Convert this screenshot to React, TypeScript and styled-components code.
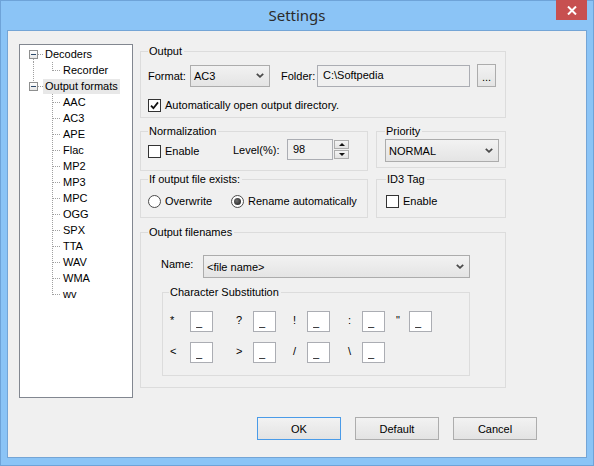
import React from 'react';
import styled, { createGlobalStyle } from 'styled-components';

const GlobalStyle = createGlobalStyle`
  html, body {
    margin: 0;
    padding: 0;
    background: #ffffff;
  }
  body {
    font-family: 'Liberation Sans', Arial, sans-serif;
    font-size: 11px;
    color: #000;
  }
  * {
    box-sizing: border-box;
  }
`;

const formats = ['AAC', 'AC3', 'APE', 'Flac', 'MP2', 'MP3', 'MPC', 'OGG', 'SPX', 'TTA', 'WAV', 'WMA', 'wv'];

const substitutions = [
  ['*', '?', '!', ':', '"'],
  ['<', '>', '/', '\\'],
];

function Chevron() {
  return (
    <svg width="8" height="5" viewBox="0 0 8 5">
      <polyline points="0.8,0.8 4,3.8 7.2,0.8" fill="none" stroke="#4a4a4a" strokeWidth="1.8" />
    </svg>
  );
}

function CheckMark() {
  return (
    <svg width="9" height="9" viewBox="0 0 9 9">
      <polyline points="1,4.6 3.4,7.2 8,1.4" fill="none" stroke="#111" strokeWidth="1.8" />
    </svg>
  );
}

function Check({ checked, label }: { checked?: boolean; label: string }) {
  return (
    <CheckLabel>
      <CheckBox>{checked && <CheckMark />}</CheckBox>
      {label}
    </CheckLabel>
  );
}

function Radio({ on, label }: { on?: boolean; label: string }) {
  return (
    <CheckLabel>
      <RadioDot $on={on} />
      {label}
    </CheckLabel>
  );
}

function Combo({ value, width, height }: { value: string; width: number; height: number }) {
  return (
    <ComboBox $w={width} $h={height}>
      <span>{value}</span>
      <Chevron />
    </ComboBox>
  );
}

function FormatTree() {
  return (
    <Tree>
      <TreeRow>
        <Expander />
        <Stem $x={13} $from={13} $to={16} />
        <Branch $x={18} $w={5} />
        <NodeLabel>Decoders</NodeLabel>
      </TreeRow>
      <TreeRow $child>
        <Stem $x={13} $from={0} $to={16} />
        <Stem $x={32} $from={0} $to={9} />
        <Branch $x={33} $w={8} />
        <NodeLabel>Recorder</NodeLabel>
      </TreeRow>
      <TreeRow>
        <Expander />
        <Stem $x={13} $from={0} $to={4} />
        <Branch $x={18} $w={5} />
        <NodeLabel $selected>Output formats</NodeLabel>
      </TreeRow>
      {formats.map((f, i) => (
        <TreeRow $child key={f}>
          <Stem $x={32} $from={0} $to={i === formats.length - 1 ? 9 : 16} />
          <Branch $x={33} $w={8} />
          <NodeLabel>{f}</NodeLabel>
        </TreeRow>
      ))}
    </Tree>
  );
}

export default function App() {
  return (
    <>
      <GlobalStyle />
      <Window>
        <TitleBar>
          <Title>Settings</Title>
          <CloseButton aria-label="Close">
            <svg width="10" height="9" viewBox="0 0 10 9">
              <path d="M1 0.5 L9 8.5 M9 0.5 L1 8.5" stroke="#fff" strokeWidth="2" />
            </svg>
          </CloseButton>
        </TitleBar>
        <Client>
          <Body>
            <FormatTree />
            <Panel>
              <Group $pl={7} $pt={6} $pb={5}>
                <Legend>Output</Legend>
                <OutputRow>
                  <span>Format:</span>
                  <Combo value="AC3" width={80} height={22} />
                  <span>Folder:</span>
                  <Field $w={153} $h={22} readOnly value="C:\Softpedia" />
                  <SmallButton>...</SmallButton>
                </OutputRow>
                <CheckRow $mt={11}>
                  <Check checked label="Automatically open output directory." />
                </CheckRow>
              </Group>

              <PairGrid>
                <Group $pl={7} $pt={1} $pb={10}>
                  <Legend>Normalization</Legend>
                  <NormRow>
                    <CheckRow $mt={3}>
                      <Check label="Enable" />
                    </CheckRow>
                    <span>Level(%):</span>
                    <Field $w={46} $h={21} readOnly value="98" />
                    <Spinner>
                      <SpinButton>
                        <Arrow $up />
                      </SpinButton>
                      <SpinButton>
                        <Arrow />
                      </SpinButton>
                    </Spinner>
                  </NormRow>
                </Group>
                <Group $pl={8} $pt={1} $pb={5}>
                  <Legend>Priority</Legend>
                  <Combo value="NORMAL" width={114} height={23} />
                </Group>
                <Group $pl={7} $pt={8} $pb={9}>
                  <Legend>If output file exists:</Legend>
                  <RadioRow>
                    <Radio label="Overwrite" />
                    <Radio on label="Rename automatically" />
                  </RadioRow>
                </Group>
                <Group $pl={9} $pt={8} $pb={9}>
                  <Legend>ID3 Tag</Legend>
                  <CheckRow>
                    <Check label="Enable" />
                  </CheckRow>
                </Group>
              </PairGrid>

              <Group $pl={7} $pt={16} $pb={11} $mt={7}>
                <Legend>Output filenames</Legend>
                <FilenamesBody>
                  <NameRow>
                    <NameLabel>Name:</NameLabel>
                    <Combo value="<file name>" width={267} height={23} />
                  </NameRow>
                  <SubGroup $pl={6} $pt={12} $pb={12}>
                    <Legend>Character Substitution</Legend>
                    <SubGrid>
                      {substitutions.map((row) =>
                        row.map((ch) => (
                          <React.Fragment key={ch}>
                            <Symbol>{ch}</Symbol>
                            <SubCell>
                              <SubField readOnly value="_" />
                            </SubCell>
                          </React.Fragment>
                        )),
                      )}
                    </SubGrid>
                  </SubGroup>
                </FilenamesBody>
              </Group>
            </Panel>
          </Body>
          <ButtonRow>
            <DialogButton $primary>OK</DialogButton>
            <DialogButton>Default</DialogButton>
            <DialogButton>Cancel</DialogButton>
          </ButtonRow>
        </Client>
      </Window>
    </>
  );
}

const Window = styled.div`
  width: 594px;
  height: 466px;
  border: 1px solid #6ea3d8;
  background: #8bc4f6;
  padding: 0 6px 7px;
  display: flex;
  flex-direction: column;
`;

const TitleBar = styled.div`
  height: 29px;
  display: grid;
  grid-template-columns: 1fr auto 1fr;
  align-items: center;
`;

const Title = styled.div`
  grid-column: 2;
  font-family: 'Noto Sans', 'Open Sans', sans-serif;
  font-size: 15px;
  color: #2b2b2b;
  line-height: 29px;
`;

const CloseButton = styled.button`
  grid-column: 3;
  justify-self: end;
  align-self: start;
  width: 31px;
  height: 20px;
  margin-top: -1px;
  border: none;
  padding: 0;
  background: #c75050;
  display: flex;
  align-items: center;
  justify-content: center;
`;

const Client = styled.div`
  flex: 1;
  background: #f0f0f0;
  border: 1px solid #74a5d6;
  padding: 13px 0 0 11px;
  display: flex;
  flex-direction: column;
`;

const Body = styled.div`
  display: flex;
  align-items: flex-start;
  gap: 7px;
`;

const Tree = styled.div`
  width: 114px;
  height: 354px;
  border: 1px solid #828790;
  background: #fff;
  padding-top: 1px;
`;

const TreeRow = styled.div<{ $child?: boolean }>`
  position: relative;
  height: 16px;
  display: flex;
  align-items: center;
  padding-left: ${(p) => (p.$child ? 41 : 23)}px;
`;

const NodeLabel = styled.span<{ $selected?: boolean }>`
  padding: 0 2px;
  line-height: 15px;
  white-space: nowrap;
  background: ${(p) => (p.$selected ? '#e8e8e8' : 'transparent')};
`;

const Expander = styled.span`
  position: absolute;
  left: 9px;
  top: 4px;
  width: 9px;
  height: 9px;
  border: 1px solid #8e8f8f;
  background: linear-gradient(#ffffff, #e6e6e6);
  &::after {
    content: '';
    position: absolute;
    left: 1px;
    top: 3px;
    width: 5px;
    height: 1px;
    background: #2d4a6b;
  }
`;

const Stem = styled.span<{ $x: number; $from: number; $to: number }>`
  position: absolute;
  left: ${(p) => p.$x}px;
  top: ${(p) => p.$from}px;
  width: 1px;
  height: ${(p) => p.$to - p.$from}px;
  background-image: linear-gradient(#a0a0a0 50%, transparent 50%);
  background-size: 1px 2px;
`;

const Branch = styled.span<{ $x: number; $w: number }>`
  position: absolute;
  left: ${(p) => p.$x}px;
  top: 8px;
  width: ${(p) => p.$w}px;
  height: 1px;
  background-image: linear-gradient(to right, #a0a0a0 50%, transparent 50%);
  background-size: 2px 1px;
`;

const Panel = styled.div`
  width: 366px;
  display: flex;
  flex-direction: column;
`;

const Group = styled.fieldset<{ $pl: number; $pt: number; $pb: number; $mt?: number }>`
  margin: ${(p) => p.$mt ?? 0}px 0 0;
  min-width: 0;
  border: 1px solid #dcdcdc;
  padding: ${(p) => p.$pt}px 4px ${(p) => p.$pb}px ${(p) => p.$pl}px;
`;

const SubGroup = styled(Group)`
  width: 308px;
  margin-top: 7px;
  margin-left: 1px;
`;

const Legend = styled.legend`
  padding: 0 2px 0 1px;
  line-height: 14px;
  font-size: 11px;
`;

const OutputRow = styled.div`
  display: grid;
  grid-template-columns: 42px 91px 36px 160px 19px;
  align-items: center;
`;

const ComboBox = styled.div<{ $w: number; $h: number }>`
  width: ${(p) => p.$w}px;
  height: ${(p) => p.$h}px;
  border: 1px solid #acacac;
  background: linear-gradient(#f2f2f2, #e4e4e4);
  display: flex;
  align-items: center;
  justify-content: space-between;
  padding: 0 5px 0 3px;
  white-space: nowrap;
`;

const Field = styled.input<{ $w: number; $h: number }>`
  width: ${(p) => p.$w}px;
  height: ${(p) => p.$h}px;
  border: 1px solid #abadb3;
  background: #f0f0f0;
  font-family: inherit;
  font-size: 11px;
  color: #000;
  padding: 0 0 1px 5px;
  outline: none;
  margin: 0;
`;

const SmallButton = styled.button`
  width: 19px;
  height: 23px;
  border: 1px solid #acacac;
  background: linear-gradient(#f2f2f2, #e4e4e4);
  font-family: inherit;
  font-size: 11px;
  color: #000;
  padding: 0 0 3px;
  margin: 0;
  display: flex;
  align-items: flex-end;
  justify-content: center;
`;

const CheckRow = styled.div<{ $mt?: number }>`
  display: flex;
  margin-top: ${(p) => p.$mt ?? 0}px;
  line-height: 14px;
`;

const CheckLabel = styled.label`
  display: flex;
  align-items: center;
  gap: 4px;
  white-space: nowrap;
  line-height: 14px;
`;

const CheckBox = styled.span`
  width: 13px;
  height: 13px;
  flex: none;
  border: 1px solid #333;
  background: #fff;
  display: flex;
  align-items: center;
  justify-content: center;
`;

const RadioDot = styled.span<{ $on?: boolean }>`
  width: 13px;
  height: 13px;
  flex: none;
  border-radius: 50%;
  border: 1px solid #4a4a4a;
  background: #fff;
  display: flex;
  align-items: center;
  justify-content: center;
  &::after {
    content: '';
    display: ${(p) => (p.$on ? 'block' : 'none')};
    width: 7px;
    height: 7px;
    border-radius: 50%;
    background: radial-gradient(circle at 40% 40%, #707070, #151515);
  }
`;

const PairGrid = styled.div`
  display: grid;
  grid-template-columns: 228px 130px;
  column-gap: 8px;
  row-gap: 1px;
  align-items: start;
  margin-top: 6px;
`;

const NormRow = styled.div`
  display: grid;
  grid-template-columns: 85px 54px 46px 16px;
  align-items: center;
`;

const Spinner = styled.div`
  width: 16px;
  height: 21px;
  display: flex;
  flex-direction: column;
  gap: 1px;
  padding: 1px 0 1px 1px;
`;

const SpinButton = styled.div`
  flex: 1;
  border: 1px solid #adadad;
  background: linear-gradient(#f4f4f4, #e2e2e2);
  display: flex;
  align-items: center;
  justify-content: center;
`;

const Arrow = styled.span<{ $up?: boolean }>`
  width: 0;
  height: 0;
  border-left: 3px solid transparent;
  border-right: 3px solid transparent;
  ${(p) => (p.$up ? 'border-bottom: 3px solid #111;' : 'border-top: 3px solid #111;')}
`;

const RadioRow = styled.div`
  display: grid;
  grid-template-columns: 83px auto;
  align-items: center;
`;

const FilenamesBody = styled.div`
  padding-left: 13px;
  display: flex;
  flex-direction: column;
`;

const NameRow = styled.div`
  display: grid;
  grid-template-columns: 42px 267px;
  align-items: start;
`;

const NameLabel = styled.span`
  line-height: 14px;
  padding-top: 2px;
`;

const SubGrid = styled.div`
  display: grid;
  grid-template-columns: 21px 45px 18px 39px 15px 40px 15px 33px 14px 23px;
  grid-auto-rows: 21px;
  row-gap: 10px;
`;

const Symbol = styled.span`
  padding: 2px 0 0 1px;
  line-height: 14px;
`;

const SubCell = styled.div`
  display: flex;
`;

const SubField = styled.input`
  width: 23px;
  height: 21px;
  border: 1px solid #abadb3;
  background: #fff;
  font-family: inherit;
  font-size: 11px;
  color: #000;
  padding: 0 0 0 5px;
  margin: 0;
  outline: none;
`;

const ButtonRow = styled.div`
  display: flex;
  justify-content: flex-end;
  gap: 14px;
  margin-top: 19px;
  padding-right: 49px;
`;

const DialogButton = styled.button<{ $primary?: boolean }>`
  width: 84px;
  height: 23px;
  margin: 0;
  padding: 0;
  border: 1px solid ${(p) => (p.$primary ? '#4a9be8' : '#adadad')};
  background: linear-gradient(#f2f2f2, #e3e3e3);
  font-family: inherit;
  font-size: 11px;
  color: #000;
`;
